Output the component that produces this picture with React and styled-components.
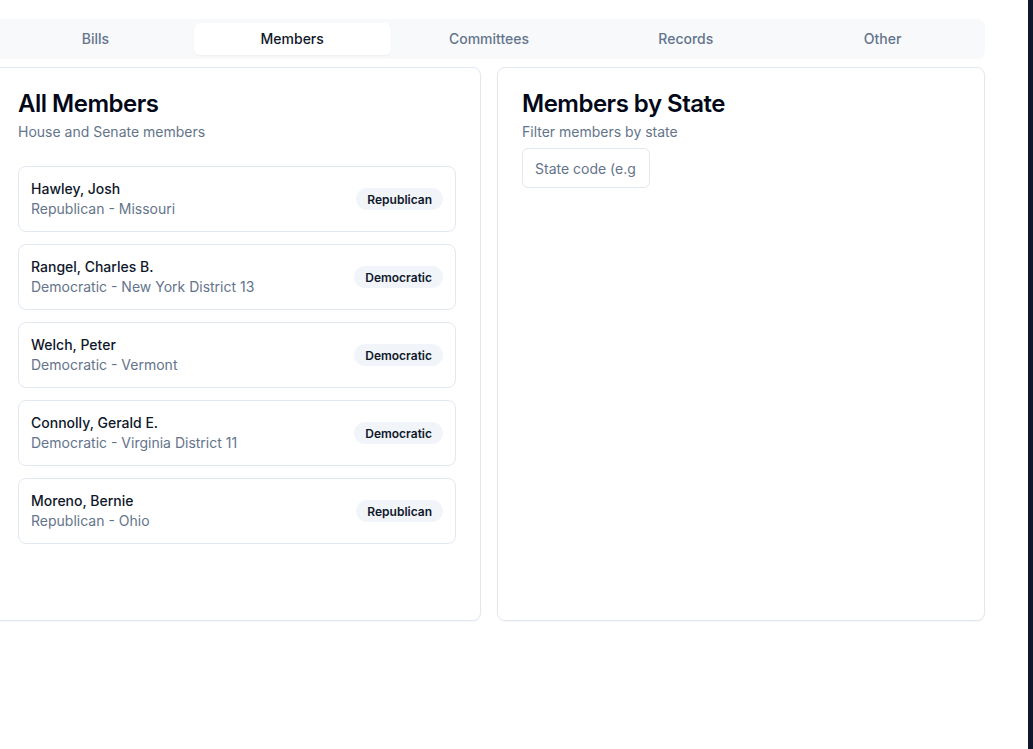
import React, { useState } from "react";
import styled, { createGlobalStyle } from "styled-components";

const members = [
  { name: "Hawley, Josh", party: "Republican", place: "Missouri" },
  { name: "Rangel, Charles B.", party: "Democratic", place: "New York District 13" },
  { name: "Welch, Peter", party: "Democratic", place: "Vermont" },
  { name: "Connolly, Gerald E.", party: "Democratic", place: "Virginia District 11" },
  { name: "Moreno, Bernie", party: "Republican", place: "Ohio" },
];

const tabs = ["Bills", "Members", "Committees", "Records", "Other"];

const App = () => {
  const [active, setActive] = useState("Members");
  const [state, setState] = useState("");

  return (
    <Page>
      <GlobalStyle />
      <Main>
        <Content>
          <TabList>
            {tabs.map((t) => (
              <Tab key={t} active={t === active} onClick={() => setActive(t)}>
                {t}
              </Tab>
            ))}
          </TabList>
          <Grid>
            <Card>
              <Header>
                <Title>All Members</Title>
                <Description>House and Senate members</Description>
              </Header>
              <List>
                {members.map((m) => (
                  <Item key={m.name}>
                    <div>
                      <Name>{m.name}</Name>
                      <Sub>
                        {m.party} - {m.place}
                      </Sub>
                    </div>
                    <Badge>{m.party}</Badge>
                  </Item>
                ))}
              </List>
            </Card>
            <Card>
              <Header>
                <Title>Members by State</Title>
                <Description>Filter members by state</Description>
                <Input
                  placeholder="State code (e.g., CA)"
                  value={state}
                  onChange={(e) => setState(e.target.value)}
                />
              </Header>
            </Card>
          </Grid>
        </Content>
      </Main>
      <Edge />
    </Page>
  );
};

export default App;

const GlobalStyle = createGlobalStyle`
  * { box-sizing: border-box; }
  body {
    margin: 0;
    background: #ffffff;
    font-family: Inter, "Noto Sans", sans-serif;
    color: #020817;
    overflow: hidden;
  }
`;

const Page = styled.div`
  display: flex;
  min-height: 100vh;
  width: 1033px;
`;

const Main = styled.div`
  flex: 1;
  padding-top: 19px;
  overflow: hidden;
`;

const Edge = styled.div`
  width: 5px;
  background: #0f172a;
`;

const Content = styled.div`
  width: 992px;
  margin-left: -7px;
  display: flex;
  flex-direction: column;
  gap: 8px;
`;

const TabList = styled.div`
  display: grid;
  grid-template-columns: repeat(5, 1fr);
  height: 40px;
  padding: 4px;
  background: #f7f9fb;
  border-radius: 8px;
`;

const Tab = styled.button`
  border: none;
  border-radius: 6px;
  padding: 0 0 2px;
  font-family: inherit;
  font-size: 14px;
  font-weight: 500;
  cursor: pointer;
  background: ${(p) => (p.active ? "#ffffff" : "transparent")};
  color: ${(p) => (p.active ? "#0f172a" : "#64748b")};
  box-shadow: ${(p) => (p.active ? "0 1px 2px rgba(0,0,0,0.05)" : "none")};
`;

const Grid = styled.div`
  display: grid;
  grid-template-columns: 1fr 1fr;
  gap: 16px;
`;

const Card = styled.div`
  border: 1px solid #e2e8f0;
  border-radius: 8px;
  background: #ffffff;
  box-shadow: 0 1px 2px rgba(0, 0, 0, 0.04);
`;

const Header = styled.div`
  display: flex;
  flex-direction: column;
  align-items: flex-start;
  gap: 6px;
  padding: 24px;
`;

const Title = styled.h3`
  margin: 0;
  font-size: 24px;
  line-height: 24px;
  font-weight: 600;
  letter-spacing: -0.5px;
  color: #020817;
`;

const Description = styled.p`
  margin: 0;
  font-size: 14px;
  line-height: 20px;
  color: #64748b;
`;

const Input = styled.input`
  width: 128px;
  height: 40px;
  padding: 0 12px;
  border: 1px solid #e2e8f0;
  border-radius: 6px;
  font-family: inherit;
  font-size: 14px;
  color: #0f172a;
  outline: none;
  &::placeholder {
    color: #64748b;
  }
`;

const List = styled.div`
  display: flex;
  flex-direction: column;
  gap: 12px;
  padding: 0 24px;
  height: 454px;
`;

const Item = styled.div`
  display: flex;
  align-items: center;
  justify-content: space-between;
  padding: 12px;
  border: 1px solid #e2e8f0;
  border-radius: 8px;
`;

const Name = styled.div`
  font-size: 14px;
  line-height: 20px;
  font-weight: 500;
  color: #0f172a;
`;

const Sub = styled.div`
  font-size: 14px;
  line-height: 20px;
  color: #64748b;
`;

const Badge = styled.span`
  display: inline-flex;
  align-items: center;
  height: 22px;
  padding: 0 11px;
  border-radius: 999px;
  background: #f1f5f9;
  color: #0f172a;
  font-size: 12px;
  font-weight: 600;
`;
